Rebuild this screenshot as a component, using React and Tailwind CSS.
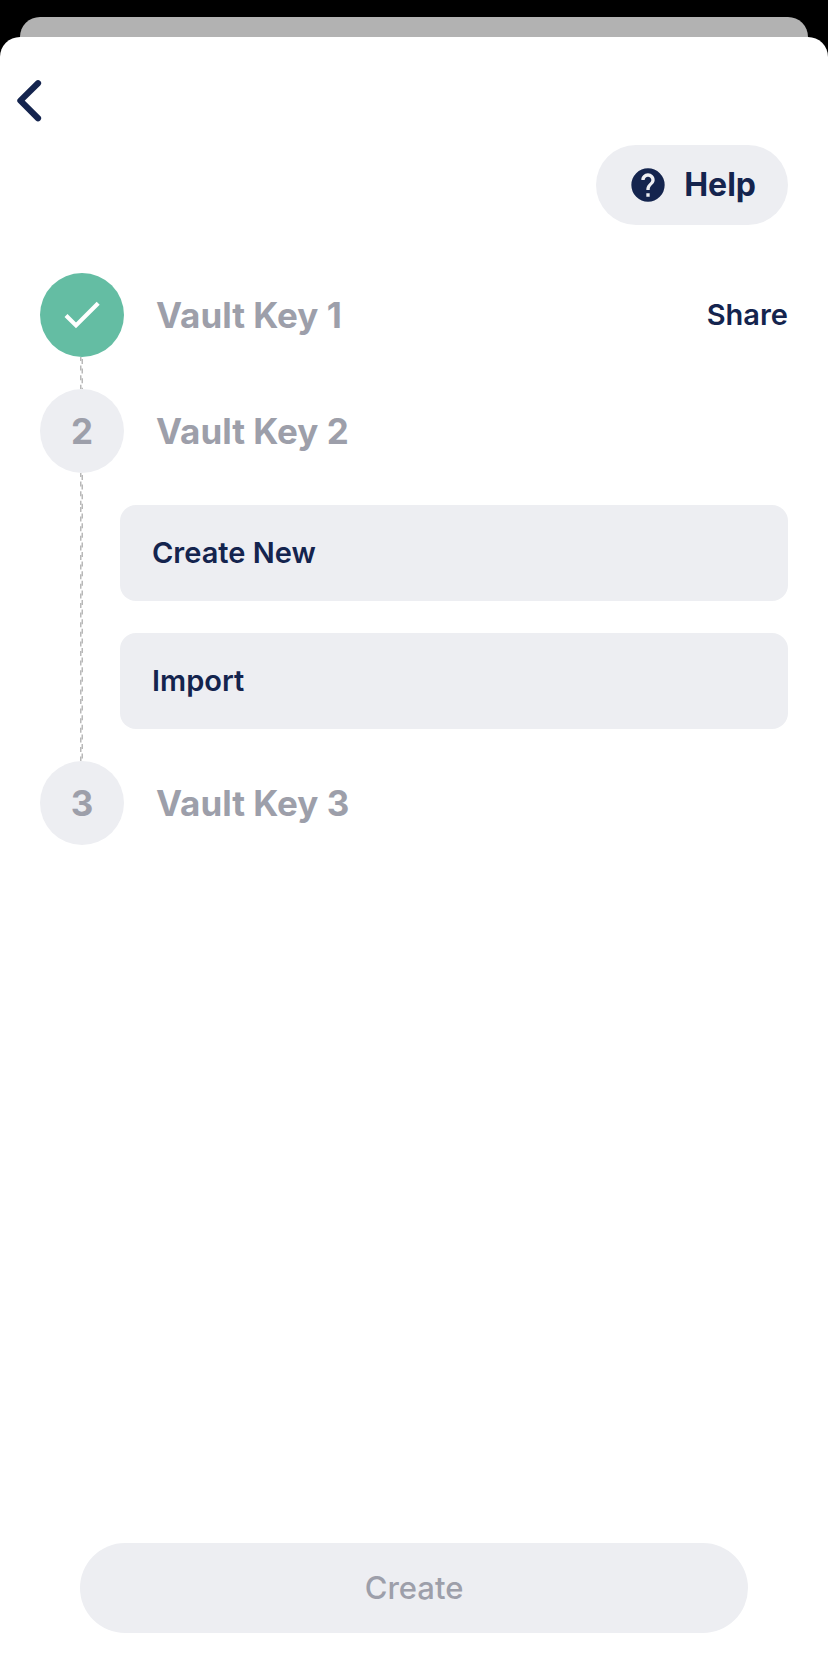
import React from "react";

const steps = [
  { id: 1, label: "Vault Key 1", done: true, share: true },
  { id: 2, label: "Vault Key 2", options: ["Create New", "Import"] },
  { id: 3, label: "Vault Key 3" },
];

function Dashes({ reverse = false, className = "" }) {
  return (
    <svg className={`w-[3px] ${className}`} stroke="#b9b9b9" strokeWidth="1.5" strokeDasharray="5 4.6" aria-hidden="true">
      <line x1="0.75" y1={reverse ? 2 : -1} x2="0.75" y2="100%" />
      <line x1="2.25" y1={reverse ? -1 : 2} x2="2.25" y2="100%" />
    </svg>
  );
}

function StepBadge({ step }) {
  return (
    <div
      className={`flex size-[84px] shrink-0 items-center justify-center rounded-full text-[35px] font-bold ${
        step.done ? "bg-[#64bda3]" : "bg-[#edeef2] text-[#9d9faa]"
      }`}
    >
      {step.done ? (
        <svg viewBox="0 0 36 28" className="h-7 w-9" fill="none" stroke="#fff" strokeWidth="4.2" role="img" aria-label="Done">
          <path d="M2 14.4 12 24.4 34.2 2.2" />
        </svg>
      ) : (
        step.id
      )}
    </div>
  );
}

function Step({ step, last }) {
  return (
    <li>
      <div className="flex items-center">
        <StepBadge step={step} />
        <h2 className="ml-8 flex-1 text-[35px] font-bold text-[#9d9faa]">{step.label}</h2>
        {step.share && (
          <button type="button" className="text-[29px] font-semibold text-[#14244e]">
            Share
          </button>
        )}
      </div>
      {!last && (
        <div className="flex min-h-8">
          <div className="flex w-20 shrink-0 flex-col items-end pr-[37px]">
            <Dashes className="h-8 shrink-0" />
            {step.options && <Dashes reverse className="h-0 flex-1" />}
          </div>
          {step.options && (
            <div className="flex flex-1 flex-col gap-8 py-8">
              {step.options.map((option) => (
                <button
                  key={option}
                  type="button"
                  className="h-24 rounded-2xl bg-[#edeef2] px-8 text-left text-[29px] font-semibold text-[#14244e]"
                >
                  {option}
                </button>
              ))}
            </div>
          )}
        </div>
      )}
    </li>
  );
}

export default function App() {
  return (
    <div className="flex min-h-screen flex-col bg-black pt-[17px] font-['Inter',sans-serif]">
      <div className="mx-5 h-5 rounded-t-[20px] bg-[#b2b2b2]" />
      <main className="flex flex-1 flex-col rounded-t-[20px] bg-white px-10 pt-9 pb-10">
        <button type="button" aria-label="Back" className="-ml-7 flex h-14 w-8 items-center justify-center">
          <svg viewBox="0 0 32 56" className="h-14 w-8" fill="none" stroke="#14244e" strokeWidth="6.2" strokeLinecap="round" strokeLinejoin="round">
            <path d="M26 10.2 8.4 27.6 26 45.2" />
          </svg>
        </button>
        <button
          type="button"
          className="mt-4 flex h-20 items-center gap-4 self-end rounded-full bg-[#edeef2] px-8 text-[32px] font-bold text-[#14244e]"
        >
          <svg viewBox="0 0 24 24" className="size-10" fill="#14244e" aria-hidden="true">
            <path
              fillRule="evenodd"
              d="M12 2a10 10 0 1 0 0 20 10 10 0 0 0 0-20zm1 17h-2v-2h2v2zm2.07-7.75-.9.92C13.45 12.9 13 13.5 13 15h-2v-.5c0-1.1.45-2.1 1.17-2.83l1.24-1.26c.37-.36.59-.86.59-1.41 0-1.1-.9-2-2-2s-2 .9-2 2H8c0-2.21 1.79-4 4-4s4 1.79 4 4c0 .88-.36 1.68-.93 2.25z"
            />
          </svg>
          Help
        </button>
        <ol className="mt-12">
          {steps.map((step, i) => (
            <Step key={step.id} step={step} last={i === steps.length - 1} />
          ))}
        </ol>
        <button
          type="button"
          disabled
          className="mx-10 mt-auto h-[90px] rounded-full bg-[#edeef2] text-[31px] font-medium text-[#9d9faa]"
        >
          Create
        </button>
      </main>
    </div>
  );
}
